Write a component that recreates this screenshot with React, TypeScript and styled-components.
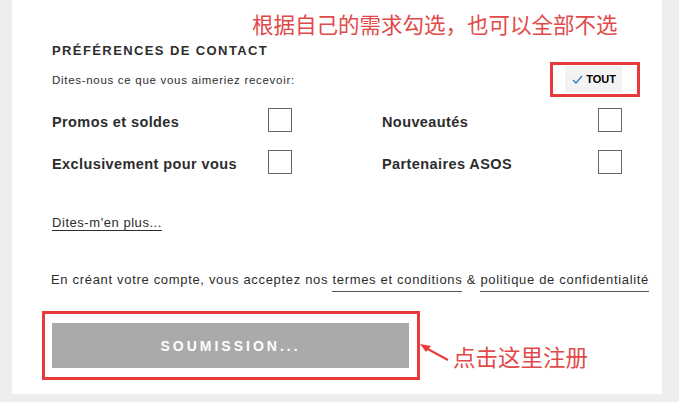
import React from 'react';
import styled, { createGlobalStyle } from 'styled-components';

const GlobalStyle = createGlobalStyle`
	html, body {
		margin: 0;
		padding: 0;
		background: #eeeeee;
	}
	body {
		font-family: 'Liberation Sans', Arial, sans-serif;
		color: #2d2d2d;
	}
`;

const Page = styled.div`
	position: relative;
	width: 679px;
	height: 402px;
	overflow: hidden;
`;

const Panel = styled.div`
	margin-left: 12px;
	width: 650px;
	height: 394px;
	background: #ffffff;
	box-sizing: border-box;
	padding: 43px 14px 0 40px;
`;

const Title = styled.h3`
	margin: 0;
	font-size: 13px;
	line-height: 16px;
	font-weight: 700;
	letter-spacing: 1.4px;
	color: #2d2d2d;
`;

const HeaderRow = styled.div`
	width: 570px;
	height: 35px;
	margin-top: 3px;
	display: flex;
	align-items: center;
	justify-content: space-between;
`;

const Hint = styled.span`
	font-size: 11.5px;
	letter-spacing: 0.7px;
	color: #2d2d2d;
`;

const Marked = styled.div<{ pad: string }>`
	border: 3px solid #e8393b;
	padding: ${(p) => p.pad};
	display: flex;
	align-items: center;
`;

const TopMarked = styled(Marked)`
	margin-right: -18px;
`;

const AllButton = styled.button`
	display: flex;
	align-items: center;
	gap: 3px;
	height: 26px;
	padding: 0 6px 0 7px;
	border: none;
	background: #f3f3f3;
	font-family: 'Liberation Sans', Arial, sans-serif;
	font-size: 11px;
	font-weight: 700;
	color: #000;
`;

const Options = styled.div`
	margin-top: 11px;
	display: grid;
	grid-template-columns: 240px 240px;
	column-gap: 90px;
	row-gap: 18px;
`;

const Option = styled.label`
	display: flex;
	align-items: center;
	justify-content: space-between;
	height: 24px;
	font-size: 14.5px;
	font-weight: 700;
	letter-spacing: 0.4px;
	color: #2d2d2d;
`;

const OptionText = styled.span`
	padding-top: 4px;
`;

const Box = styled.span`
	width: 24px;
	height: 24px;
	box-sizing: border-box;
	border: 1px solid #666666;
	background: #fff;
`;

const MoreLink = styled.a`
	display: inline-block;
	margin-top: 41px;
	font-size: 13px;
	line-height: 16px;
	letter-spacing: 0.55px;
	color: #2d2d2d;
	text-decoration: underline;
	text-underline-offset: 3px;
`;

const Terms = styled.p`
	margin: 41px 0 0 -1px;
	font-size: 13px;
	line-height: 16px;
	white-space: nowrap;
	color: #2d2d2d;
	letter-spacing: 0.68px;
`;

const TermLink = styled.a`
	color: #2d2d2d;
	text-decoration: none;
	border-bottom: 1px solid #555;
	padding-bottom: 4px;
`;

const SubmitMarked = styled(Marked)`
	margin: 23px 0 0 -10px;
	width: fit-content;
`;

const Submit = styled.button`
	width: 357px;
	height: 45px;
	border: none;
	background: #aaaaaa;
	color: #ffffff;
	font-family: 'Liberation Sans', Arial, sans-serif;
	font-size: 14px;
	font-weight: 700;
	letter-spacing: 3px;
`;

const Note = styled.div<{ x: number; y: number; size: number }>`
	position: absolute;
	left: ${(p) => p.x}px;
	top: ${(p) => p.y}px;
	font-family: 'Noto Sans CJK SC', sans-serif;
	font-size: ${(p) => p.size}px;
	line-height: 26px;
	color: #e24a4a;
	white-space: nowrap;
`;

const Arrow = styled.svg`
	position: absolute;
	left: 418px;
	top: 340px;
`;

const options = ['Promos et soldes', 'Nouveautés', 'Exclusivement pour vous', 'Partenaires ASOS'];

export default function App() {
	return (
		<Page>
			<GlobalStyle />
			<Panel>
				<Title>PRÉFÉRENCES DE CONTACT</Title>
				<HeaderRow>
					<Hint>Dites-nous ce que vous aimeriez recevoir:</Hint>
					<TopMarked pad="1px 15px 2px 12px">
						<AllButton>
							<svg width="11" height="9" viewBox="0 0 11 9">
								<path d="M1 5 L4 8 L10 1" fill="none" stroke="#3b73b9" strokeWidth="1.3" />
							</svg>
							TOUT
						</AllButton>
					</TopMarked>
				</HeaderRow>
				<Options>
					{options.map((o) => (
						<Option key={o}>
							<OptionText>{o}</OptionText>
							<Box />
						</Option>
					))}
				</Options>
				<MoreLink>Dites-m'en plus...</MoreLink>
				<Terms>
					En créant votre compte, vous acceptez nos <TermLink>termes et conditions</TermLink> &amp;{' '}
					<TermLink>politique de confidentialité</TermLink>
				</Terms>
				<SubmitMarked pad="9px 8px 9px 7px">
					<Submit>SOUMISSION...</Submit>
				</SubmitMarked>
			</Panel>
			<Note x={252} y={11} size={21.5}>根据自己的需求勾选，也可以全部不选</Note>
			<Arrow width="34" height="24" viewBox="0 0 34 24">
				<path d="M30 20 L6 7" stroke="#e8393b" strokeWidth="2" />
				<path d="M2 4 L13 6 L8 12 Z" fill="#e8393b" />
			</Arrow>
			<Note x={453} y={343} size={22.5}>点击这里注册</Note>
		</Page>
	);
}
